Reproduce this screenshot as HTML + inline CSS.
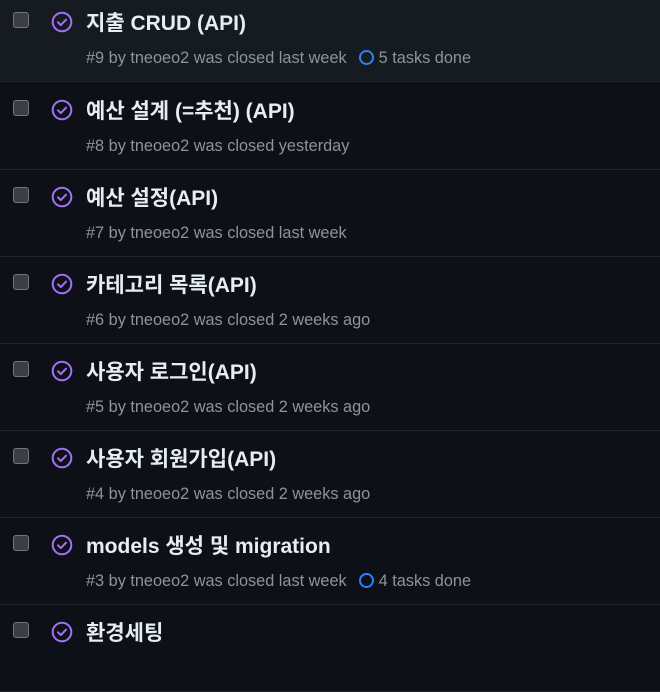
<!DOCTYPE html>
<html><head><meta charset="utf-8"><style>
html,body{margin:0;background:#0d1117;width:660px;height:648px;overflow:hidden;font-family:"Liberation Sans","Noto Sans CJK KR",sans-serif;}
.row{position:absolute;left:0;width:660px;height:86px;border-bottom:1px solid #21262d;}
.cb{position:absolute;left:13px;top:17px;width:14px;height:14px;border:1px solid #6e7681;border-radius:3px;background:#3b3f45;}
.ic{position:absolute;left:51px;top:16px;}
.t{position:absolute;left:86px;top:12px;font-size:21px;font-weight:bold;color:#e6edf3;white-space:nowrap;}
.m{position:absolute;left:86px;top:54px;font-size:16.3px;color:#8b949e;white-space:nowrap;}
.tk{display:inline-block;width:11px;height:11px;border:2.5px solid #2f81f7;border-radius:50%;vertical-align:-2px;margin:0 5px 0 12px;}
</style></head><body>
<div class="row" style="top:-5px;background:#161b22"><div class="cb"></div><svg class="ic" width="22" height="22" viewBox="0 0 22 22"><circle cx="11" cy="11" r="9.3" fill="none" stroke="#a371f7" stroke-width="2"/><path d="M7 11.3l2.8 2.8 5.2-5.4" fill="none" stroke="#a371f7" stroke-width="2" stroke-linecap="round" stroke-linejoin="round"/></svg><div class="t">지출 CRUD (API)</div><div class="m">#9 by tneoeo2 was closed last week<span class="tk"></span>5 tasks done</div></div>
<div class="row" style="top:83px"><div class="cb"></div><svg class="ic" width="22" height="22" viewBox="0 0 22 22"><circle cx="11" cy="11" r="9.3" fill="none" stroke="#a371f7" stroke-width="2"/><path d="M7 11.3l2.8 2.8 5.2-5.4" fill="none" stroke="#a371f7" stroke-width="2" stroke-linecap="round" stroke-linejoin="round"/></svg><div class="t">예산 설계 (=추천) (API)</div><div class="m">#8 by tneoeo2 was closed yesterday</div></div>
<div class="row" style="top:170px"><div class="cb"></div><svg class="ic" width="22" height="22" viewBox="0 0 22 22"><circle cx="11" cy="11" r="9.3" fill="none" stroke="#a371f7" stroke-width="2"/><path d="M7 11.3l2.8 2.8 5.2-5.4" fill="none" stroke="#a371f7" stroke-width="2" stroke-linecap="round" stroke-linejoin="round"/></svg><div class="t">예산 설정(API)</div><div class="m">#7 by tneoeo2 was closed last week</div></div>
<div class="row" style="top:257px"><div class="cb"></div><svg class="ic" width="22" height="22" viewBox="0 0 22 22"><circle cx="11" cy="11" r="9.3" fill="none" stroke="#a371f7" stroke-width="2"/><path d="M7 11.3l2.8 2.8 5.2-5.4" fill="none" stroke="#a371f7" stroke-width="2" stroke-linecap="round" stroke-linejoin="round"/></svg><div class="t">카테고리 목록(API)</div><div class="m">#6 by tneoeo2 was closed 2 weeks ago</div></div>
<div class="row" style="top:344px"><div class="cb"></div><svg class="ic" width="22" height="22" viewBox="0 0 22 22"><circle cx="11" cy="11" r="9.3" fill="none" stroke="#a371f7" stroke-width="2"/><path d="M7 11.3l2.8 2.8 5.2-5.4" fill="none" stroke="#a371f7" stroke-width="2" stroke-linecap="round" stroke-linejoin="round"/></svg><div class="t">사용자 로그인(API)</div><div class="m">#5 by tneoeo2 was closed 2 weeks ago</div></div>
<div class="row" style="top:431px"><div class="cb"></div><svg class="ic" width="22" height="22" viewBox="0 0 22 22"><circle cx="11" cy="11" r="9.3" fill="none" stroke="#a371f7" stroke-width="2"/><path d="M7 11.3l2.8 2.8 5.2-5.4" fill="none" stroke="#a371f7" stroke-width="2" stroke-linecap="round" stroke-linejoin="round"/></svg><div class="t">사용자 회원가입(API)</div><div class="m">#4 by tneoeo2 was closed 2 weeks ago</div></div>
<div class="row" style="top:518px"><div class="cb"></div><svg class="ic" width="22" height="22" viewBox="0 0 22 22"><circle cx="11" cy="11" r="9.3" fill="none" stroke="#a371f7" stroke-width="2"/><path d="M7 11.3l2.8 2.8 5.2-5.4" fill="none" stroke="#a371f7" stroke-width="2" stroke-linecap="round" stroke-linejoin="round"/></svg><div class="t">models 생성 및 migration</div><div class="m">#3 by tneoeo2 was closed last week<span class="tk"></span>4 tasks done</div></div>
<div class="row" style="top:605px"><div class="cb"></div><svg class="ic" width="22" height="22" viewBox="0 0 22 22"><circle cx="11" cy="11" r="9.3" fill="none" stroke="#a371f7" stroke-width="2"/><path d="M7 11.3l2.8 2.8 5.2-5.4" fill="none" stroke="#a371f7" stroke-width="2" stroke-linecap="round" stroke-linejoin="round"/></svg><div class="t">환경세팅</div></div>
</body></html>
